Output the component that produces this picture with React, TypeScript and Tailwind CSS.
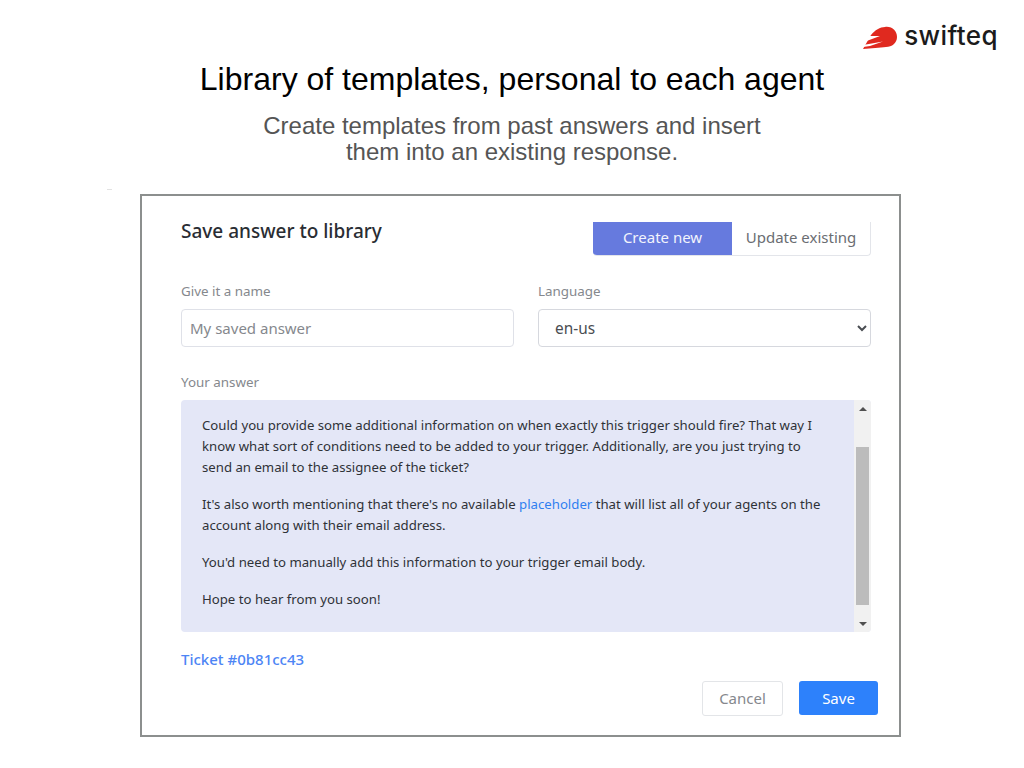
const font = "font-['Noto_Sans','Open_Sans',sans-serif]";

function Logo() {
  return (
    <div className="flex items-center justify-end pr-[26px] pt-[20px] h-[52px]">
      <svg width="34" height="24" viewBox="0 0 34 24" className="mt-[3px]">
        <path d="M0 23 L8 9 C12 4 17 1 22 1 C29 0 34 5 34 11 C34 17 29 21 23 21 C17 22 8 22 0 23 Z" fill="#e0291f" />
        <path d="M2 10 L17 10 L5 14.5 L0 14.5 Z M0 19 L20 15.5 L7 20 L0 21 Z" fill="#ffffff" />
      </svg>
      <span className="ml-[7px] text-[26px] leading-[32px] tracking-[0.4px] font-medium text-[#1b1b1b] font-['Inter',sans-serif]">
        swifteq
      </span>
    </div>
  );
}

function Field({ label, children }: { label: string; children: React.ReactNode }) {
  return (
    <div className="flex-1">
      <div className="text-[13.4px] leading-[18px] text-[#85888d]">{label}</div>
      <div className="mt-[9px]">{children}</div>
    </div>
  );
}

function Scrollbar() {
  return (
    <div className="w-[17px] shrink-0 bg-[#f1f1f1] flex flex-col items-center">
      <div className="h-[17px] w-full flex items-center justify-center">
        <div className="w-0 h-0 border-x-[4px] border-x-transparent border-b-[4px] border-b-[#505050]" />
      </div>
      <div className="w-[13px] h-[158px] mt-[30px] bg-[#bcbcbc]" />
      <div className="flex-1" />
      <div className="h-[17px] w-full flex items-center justify-center">
        <div className="w-0 h-0 border-x-[4px] border-x-transparent border-t-[4px] border-t-[#505050]" />
      </div>
    </div>
  );
}

export default function App() {
  return (
    <div className={`w-[1024px] h-[768px] bg-white overflow-hidden ${font}`}>
      <Logo />
      <h1 className="mt-[9px] text-center text-[32px] leading-[36px] text-black font-['Liberation_Sans',sans-serif]">
        Library of templates, personal to each agent
      </h1>
      <p className="mt-[16px] text-center text-[24px] leading-[26px] text-[#555555] font-['Liberation_Sans',sans-serif]">
        Create templates from past answers and insert
        <br />
        them into an existing response.
      </p>
      <div className="ml-[107px] mt-[24px] w-[5px] h-px bg-[#e2e2e2]" />

      <div className="ml-[140px] mt-[4px] w-[761px] h-[543px] border-2 border-[#8c8f8e] pl-[39px] pr-[28px] pt-[26px]">
        <div className="flex justify-between">
          <h2 className="text-[19px] leading-[20px] font-medium text-[#2a2d33] mt-[-1px]">Save answer to library</h2>
          <div className="flex h-[34px] w-[278px] rounded-b-[4px] border-b border-r border-[#e3e5ea] text-[15px] overflow-hidden">
            <div className="w-[139px] pb-[2px] bg-[#667ade] text-[#f2f4fc] flex items-center justify-center">Create new</div>
            <div className="flex-1 pb-[2px] text-[#6a6d72] flex items-center justify-center">Update existing</div>
          </div>
        </div>

        <div className="flex gap-[24px] mt-[26px]">
          <Field label="Give it a name">
            <input
              placeholder="My saved answer"
              className="w-full h-[38px] px-[8px] rounded-[4px] border border-[#dfe1e8] text-[15px] placeholder:text-[#85888d] outline-none"
            />
          </Field>
          <Field label="Language">
            <select className="w-full h-[38px] pl-[12px] rounded-[4px] border border-[#d6d8de] bg-white text-[15.4px] text-[#4a4d52] outline-none">
              <option>en-us</option>
            </select>
          </Field>
        </div>

        <div className="mt-[26px] text-[13.4px] leading-[18px] text-[#85888d]">Your answer</div>
        <div className="mt-[9px] h-[232px] flex rounded-[4px] overflow-hidden bg-[#e4e7f7]">
          <div className="flex-1 pl-[21px] pr-[32px] pt-[15px] text-[13.2px] leading-[21px] text-[#2f3237]">
            <p>
              Could you provide some additional information on when exactly this trigger should fire? That way I know
              what sort of conditions need to be added to your trigger. Additionally, are you just trying to send an
              email to the assignee of the ticket?
            </p>
            <p className="mt-[16px]">
              It's also worth mentioning that there's no available{" "}
              <span className="text-[#2f7ff0]">placeholder</span> that will list all of your agents on the account
              along with their email address.
            </p>
            <p className="mt-[16px]">You'd need to manually add this information to your trigger email body.</p>
            <p className="mt-[16px]">Hope to hear from you soon!</p>
          </div>
          <Scrollbar />
        </div>

        <div className="mt-[17px] text-[15px] leading-[20px] font-medium text-[#4d85f5]">Ticket #0b81cc43</div>

        <div className="flex justify-end gap-[16px] mt-[12px] mr-[-7px]">
          <button className="w-[81px] h-[35px] rounded-[3px] border border-[#e3e5e8] text-[15px] text-[#85888d] bg-white">
            Cancel
          </button>
          <button className="w-[79px] h-[34px] rounded-[3px] bg-[#2d81fb] text-[15px] text-white">Save</button>
        </div>
      </div>
    </div>
  );
}
